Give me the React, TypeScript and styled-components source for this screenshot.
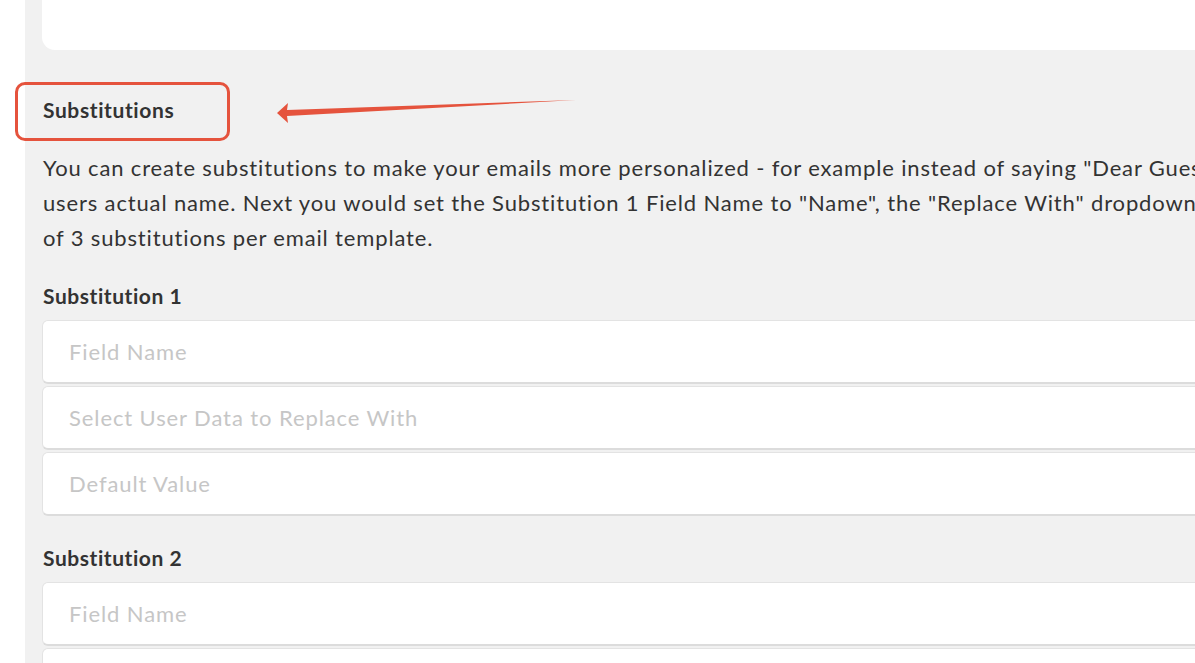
import * as React from 'react';
import styled, { createGlobalStyle } from 'styled-components';

const GlobalStyle = createGlobalStyle`
  html, body {
    margin: 0;
    padding: 0;
    background: #ffffff;
    overflow: hidden;
  }
  body {
    font-family: Lato, "Open Sans", "Liberation Sans", sans-serif;
    color: #333333;
  }
`;

type Substitution = {
  title: string;
  fields: string[];
};

const substitutions: Substitution[] = [
  {
    title: 'Substitution 1',
    fields: ['Field Name', 'Select User Data to Replace With', 'Default Value'],
  },
  {
    title: 'Substitution 2',
    fields: ['Field Name', 'Select User Data to Replace With', 'Default Value'],
  },
];

export default function App() {
  return (
    <>
      <GlobalStyle />
      <Page>
        <Gutter />
        <Panel>
          <TopCard />
          <HeadingRow>
            <SectionTitle>Substitutions</SectionTitle>
            <Highlight />
            <Arrow width="310" height="30" viewBox="0 0 310 30">
              <path d="M0 19 L11 9 L10 16 L299 6 L10 22 L11 29 Z" fill="#e5533d" />
            </Arrow>
          </HeadingRow>
          <Intro>
            You can create substitutions to make your emails more personalized - for example instead of saying "Dear Guest", you can write "Dear Name" and it will be replaced with the
            <br />
            users actual name. Next you would set the Substitution 1 Field Name to "Name", the "Replace With" dropdown to "Name" and the Default Value to "Guest". You can have a maximum
            <br />
            of 3 substitutions per email template.
          </Intro>
          {substitutions.map((s) => (
            <Group key={s.title}>
              <GroupTitle>{s.title}</GroupTitle>
              <Fields>
                {s.fields.map((f) => (
                  <Field key={f} placeholder={f} />
                ))}
              </Fields>
            </Group>
          ))}
        </Panel>
      </Page>
    </>
  );
}

const Page = styled.div`
  display: flex;
  width: 1195px;
  height: 663px;
  overflow: hidden;
`;

const Gutter = styled.div`
  flex: 0 0 25px;
  background: #ffffff;
`;

const Panel = styled.div`
  flex: 1;
  background: #f1f1f1;
  padding-left: 17px;
  min-width: 0;
`;

const TopCard = styled.div`
  width: 1400px;
  height: 50px;
  background: #ffffff;
  border-bottom-left-radius: 13px;
`;

const HeadingRow = styled.div`
  position: relative;
  margin-top: 48px;
  padding-left: 1px;
`;

const SectionTitle = styled.h2`
  margin: 0;
  font-size: 21px;
  line-height: 24px;
  letter-spacing: 0.6px;
  font-weight: 700;
  color: #333333;
`;

const Highlight = styled.div`
  position: absolute;
  left: -27px;
  top: -16px;
  width: 209px;
  height: 53px;
  border: 3px solid #e5533d;
  border-radius: 10px;
  pointer-events: none;
`;

const Arrow = styled.svg`
  position: absolute;
  left: 235px;
  top: -4px;
  overflow: visible;
`;

const Intro = styled.p`
  margin: 28px 0 0 1px;
  font-size: 22px;
  line-height: 35px;
  letter-spacing: 0.85px;
  color: #333333;
  white-space: nowrap;
`;

const Group = styled.section`
  margin-top: 29px;
  & + & {
    margin-top: 30px;
  }
`;

const GroupTitle = styled.h3`
  margin: 0 0 12px 1px;
  font-size: 21px;
  line-height: 24px;
  letter-spacing: 0.55px;
  font-weight: 700;
  color: #333333;
`;

const Fields = styled.div`
  display: flex;
  flex-direction: column;
  gap: 2px;
`;

const Field = styled.input`
  box-sizing: border-box;
  width: 1400px;
  height: 64px;
  padding: 0 26px;
  border: 1px solid #e3e3e3;
  border-bottom: 2px solid #dcdcdc;
  border-radius: 6px;
  background: #ffffff;
  font-family: Lato, "Open Sans", "Liberation Sans", sans-serif;
  font-size: 22px;
  letter-spacing: 0.9px;
  color: #333333;
  outline: none;
  &::placeholder {
    color: #c6c6c6;
  }
`;
